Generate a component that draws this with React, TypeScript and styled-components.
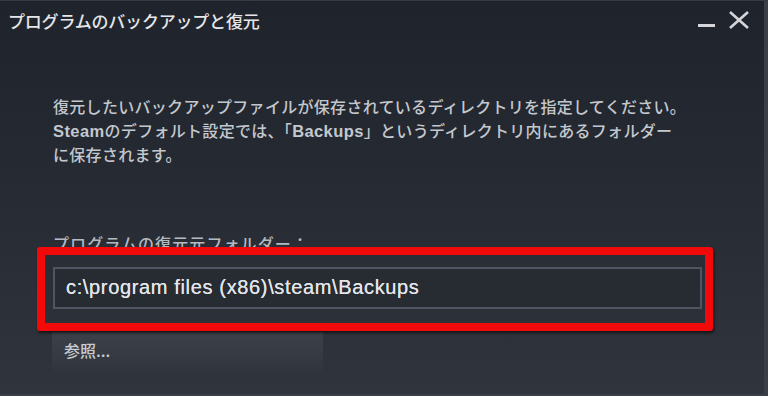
import styled, { createGlobalStyle } from 'styled-components';

const GlobalStyle = createGlobalStyle`
  html, body {
    margin: 0;
    padding: 0;
    background: #1f232b;
  }
  * {
    box-sizing: border-box;
  }
`;

const Window = styled.div`
  width: 768px;
  height: 396px;
  display: flex;
  flex-direction: column;
  background: linear-gradient(180deg, #1f232b 0%, #262a32 45%, #30343c 100%);
  border-top: 1px solid #363b45;
  border-right: 4px solid #3a3e46;
  border-bottom: 2px solid #3a3e46;
  font-family: 'Noto Sans CJK JP', 'Noto Sans', sans-serif;
  overflow: hidden;
`;

const TitleBar = styled.div`
  height: 44px;
  display: flex;
  align-items: flex-start;
  justify-content: space-between;
  padding: 6px 14px 0 8px;
`;

const Title = styled.h1`
  margin: 0;
  font-size: 17px;
  font-weight: 500;
  line-height: 28px;
  color: #e4e6ea;
  letter-spacing: -0.2px;
`;

const Controls = styled.div`
  display: flex;
  align-items: flex-start;
  gap: 10px;
  padding-top: 3px;
`;

const ControlButton = styled.button`
  background: none;
  border: none;
  padding: 0;
  width: 22px;
  height: 20px;
  display: flex;
  align-items: center;
  justify-content: center;
  color: #d4d6da;
  cursor: pointer;
`;

const Content = styled.div`
  display: flex;
  flex-direction: column;
  padding: 50px 0 0 53px;
`;

const Description = styled.p`
  margin: 0;
  font-size: 16px;
  font-weight: 500;
  line-height: 23.5px;
  letter-spacing: 0.3px;
  color: #c3c7ce;
`;

const Latin = styled.span`
  font-family: 'Liberation Sans', Arial, sans-serif;
  font-size: 16.5px;
  font-weight: 700;
  letter-spacing: 0.4px;
`;

const Label = styled.div`
  margin-top: 65px;
  font-size: 16px;
  font-weight: 500;
  line-height: 22px;
  letter-spacing: 1.1px;
  color: #b5b9c1;
`;

const FieldWrap = styled.div`
  position: relative;
  width: 649px;
  margin-top: 13px;
`;

const PathInput = styled.div`
  height: 42px;
  display: flex;
  align-items: center;
  padding-left: 11px;
  background: #272b32;
  border: 2px solid #4f5661;
  font-family: 'Liberation Sans', Arial, sans-serif;
  font-size: 20px;
  letter-spacing: 0.65px;
  color: #e2e5ea;
  text-shadow: 0 0 0.4px #e2e5ea;
`;

const Highlight = styled.div`
  position: absolute;
  top: -20px;
  left: -16px;
  right: -11px;
  bottom: -22px;
  border: 8px solid #f20a0a;
  border-radius: 3px;
  box-shadow: 1px 2px 3px rgba(0, 0, 0, 0.6);
  pointer-events: none;
`;

const BrowseButton = styled.button`
  margin-top: 23px;
  width: 271px;
  height: 40px;
  margin-left: -1px;
  display: flex;
  align-items: center;
  padding: 0 0 4px 12px;
  border: none;
  background: linear-gradient(180deg, #3c4049 0%, #363a43 60%, #30343c 100%);
  font-family: 'Noto Sans CJK JP', 'Noto Sans', sans-serif;
  font-size: 16px;
  font-weight: 500;
  color: #c8ccd2;
  cursor: pointer;
`;

export default function App() {
  return (
    <>
      <GlobalStyle />
      <Window>
        <TitleBar>
          <Title>プログラムのバックアップと復元</Title>
          <Controls>
            <ControlButton aria-label="minimize">
              <svg width="20" height="20" viewBox="0 0 20 20">
                <rect x="1" y="14" width="17" height="3" fill="currentColor" />
              </svg>
            </ControlButton>
            <ControlButton aria-label="close">
              <svg width="22" height="20" viewBox="0 0 22 20">
                <path d="M2 2 L20 18 M20 2 L2 18" stroke="currentColor" strokeWidth="2.6" />
              </svg>
            </ControlButton>
          </Controls>
        </TitleBar>
        <Content>
          <Description>
            復元したいバックアップファイルが保存されているディレクトリを指定してください。
            <br />
            <Latin>Steam</Latin>のデフォルト設定では、「<Latin>Backups</Latin>」というディレクトリ内にあるフォルダー
            <br />
            に保存されます。
          </Description>
          <Label>プログラムの復元元フォルダー：</Label>
          <FieldWrap>
            <PathInput>c:\program files (x86)\steam\Backups</PathInput>
            <Highlight />
          </FieldWrap>
          <BrowseButton>参照...</BrowseButton>
        </Content>
      </Window>
    </>
  );
}
